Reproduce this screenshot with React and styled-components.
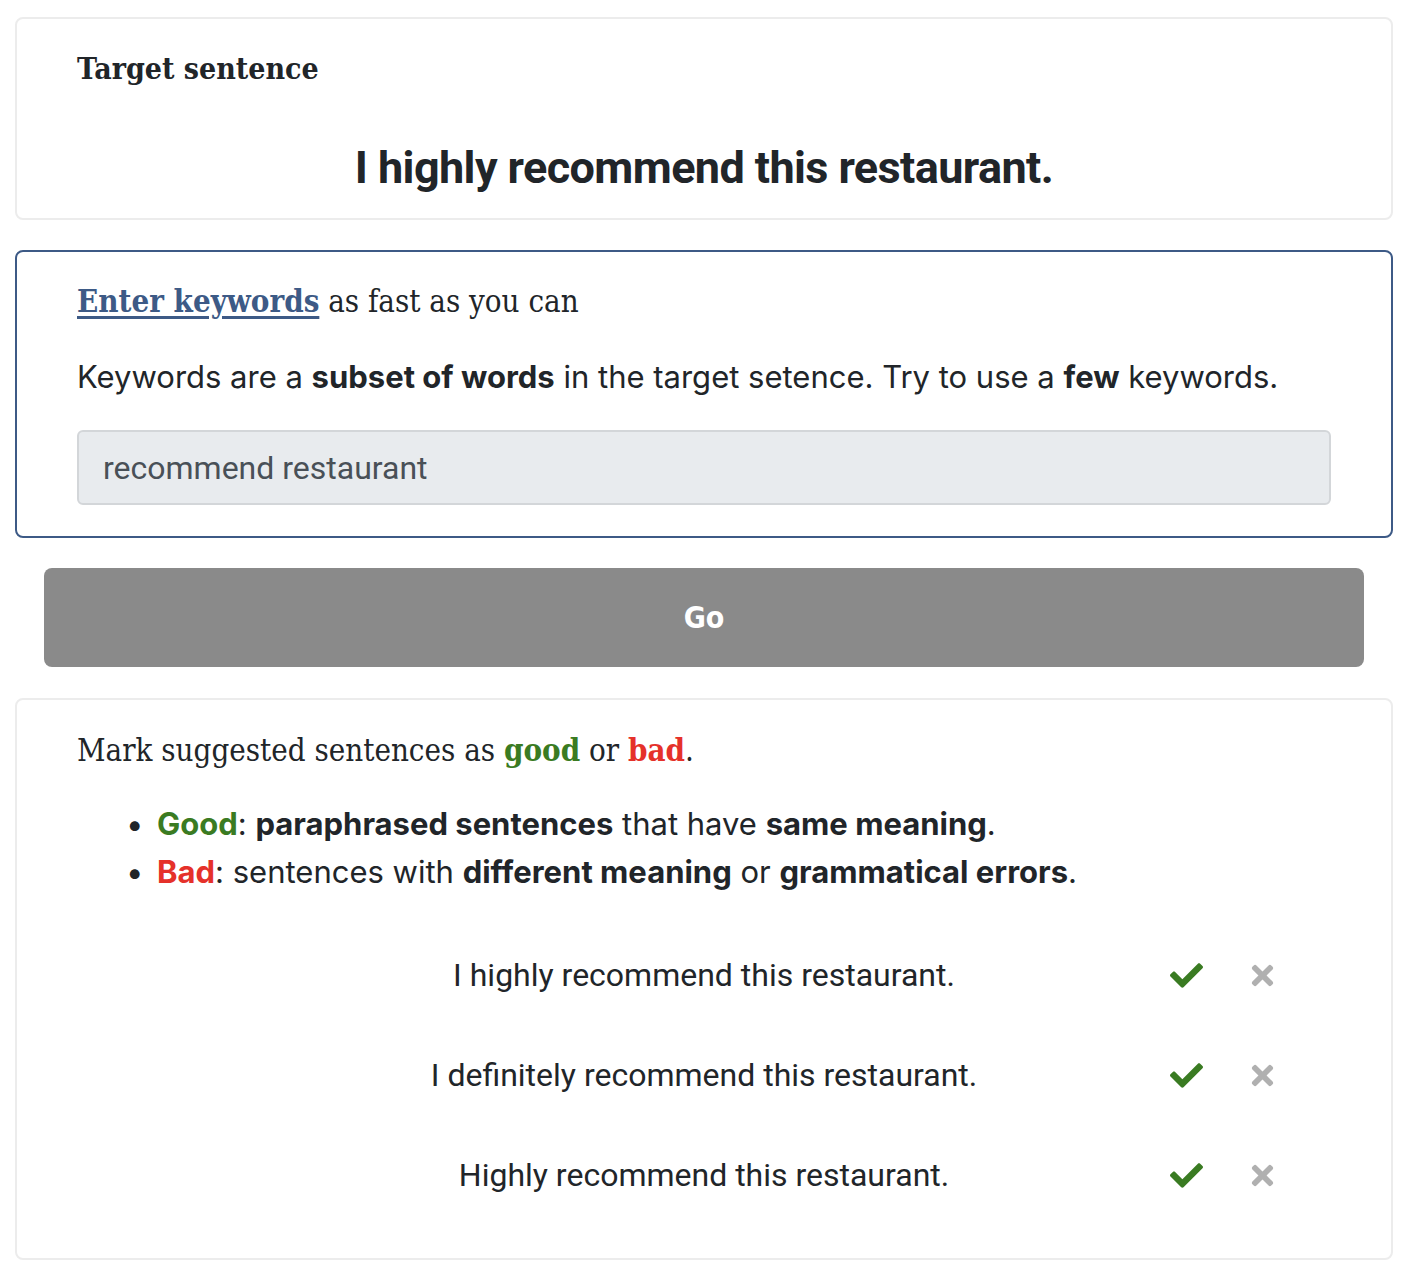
import React from 'react'
import styled, { createGlobalStyle } from 'styled-components'
import { FaCheck, FaTimes } from 'react-icons/fa'

const GlobalStyle = createGlobalStyle`
  body {
    margin: 0;
    background: #fff;
    color: #212529;
    font-family: Roboto, "Liberation Sans", sans-serif;
  }
`

const Page = styled.main`
  display: flex;
  flex-direction: column;
  gap: 30px;
  padding: 17px 21px 20px 15px;
`

const Card = styled.section`
  border: 2px solid ${p => (p.active ? '#3d5a86' : '#ececec')};
  border-radius: 8px;
  padding: ${p => p.pad};
`

const Heading = styled.h2`
  margin: 0;
  font-family: "DejaVu Serif Condensed", "DejaVu Serif", serif;
  font-weight: ${p => (p.bold ? 700 : 400)};
  font-size: ${p => (p.bold ? '30px' : '31px')};
  line-height: 46px;
  color: #212529;
`

const KeyLink = styled.a`
  color: #3d5a86;
  font-weight: 700;
  text-decoration: underline;
  text-underline-offset: 4px;
`

const Target = styled.p`
  margin: 49px 0 0;
  text-align: center;
  font-weight: 700;
  font-size: 45px;
  line-height: 54px;
  letter-spacing: -0.6px;
`

const Hint = styled.p`
  margin: 31px 0 0;
  font-family: Inter, Roboto, sans-serif;
  font-size: 31px;
  line-height: 44px;
`

const Input = styled.input`
  display: block;
  box-sizing: border-box;
  width: 100%;
  height: 75px;
  margin-top: 31px;
  padding: 0 24px;
  border: 2px solid #d3d6d9;
  border-radius: 6px;
  background: #e8ebee;
  color: #495057;
  font-family: Roboto, sans-serif;
  font-size: 32px;
  outline: none;
`

const GoButton = styled.button`
  margin: 0 29px 1px;
  height: 99px;
  border: none;
  border-radius: 8px;
  background: #8a8a8a;
  color: #fff;
  font-family: "DejaVu Sans Condensed", "DejaVu Sans", sans-serif;
  font-weight: 700;
  font-size: 30px;
  cursor: pointer;
`

const Good = styled.span`
  color: #3a7b22;
  font-weight: 700;
`

const Bad = styled.span`
  color: #e5312a;
  font-weight: 700;
`

const Rules = styled.ul`
  margin: 27px 0 0;
  padding-left: 49px;
  list-style: none;
  font-family: Inter, Roboto, sans-serif;
  font-size: 31px;
  line-height: 48px;
`

const Rule = styled.li`
  &::before {
    content: '•';
    display: inline-block;
    width: 31px;
    color: #212529;
  }
`

const Suggestions = styled.div`
  display: flex;
  flex-direction: column;
  gap: 56px;
  margin-top: 57px;
`

const Suggestion = styled.div`
  display: grid;
  grid-template-columns: 1fr 4fr 1fr;
  align-items: center;
  font-size: 32px;
  line-height: 44px;
`

const Sentence = styled.div`
  grid-column: 2;
  text-align: center;
`

const Marks = styled.div`
  display: flex;
  align-items: center;
  gap: 44px;
  padding-left: 48px;
`

const Mark = styled.button`
  display: flex;
  padding: 0;
  border: none;
  background: none;
  color: ${p => (p.good ? '#3a7b22' : '#b0b0b0')};
  font-size: ${p => (p.good ? '33px' : '31px')};
  cursor: pointer;
`

const suggestions = [
  'I highly recommend this restaurant.',
  'I definitely recommend this restaurant.',
  'Highly recommend this restaurant.',
]

export default function App() {
  return (
    <>
      <GlobalStyle />
      <Page>
        <Card pad="27px 60px 23px">
          <Heading bold>Target sentence</Heading>
          <Target>I highly recommend this restaurant.</Target>
        </Card>

        <Card active pad="26px 60px 31px">
          <Heading>
            <KeyLink href="#">Enter keywords</KeyLink> as fast as you can
          </Heading>
          <Hint>
            Keywords are a <b>subset of words</b> in the target setence. Try to use a <b>few</b> keywords.
          </Hint>
          <Input defaultValue="recommend restaurant" />
        </Card>

        <GoButton>Go</GoButton>

        <Card pad="27px 60px 61px">
          <Heading>
            Mark suggested sentences as <Good>good</Good> or <Bad>bad</Bad>.
          </Heading>
          <Rules>
            <Rule><Good>Good</Good>: <b>paraphrased sentences</b> that have <b>same meaning</b>.</Rule>
            <Rule><Bad>Bad</Bad>: sentences with <b>different meaning</b> or <b>grammatical errors</b>.</Rule>
          </Rules>
          <Suggestions>
            {suggestions.map(s => (
              <Suggestion key={s}>
                <Sentence>{s}</Sentence>
                <Marks>
                  <Mark good aria-label="good"><FaCheck /></Mark>
                  <Mark aria-label="bad"><FaTimes /></Mark>
                </Marks>
              </Suggestion>
            ))}
          </Suggestions>
        </Card>
      </Page>
    </>
  )
}
